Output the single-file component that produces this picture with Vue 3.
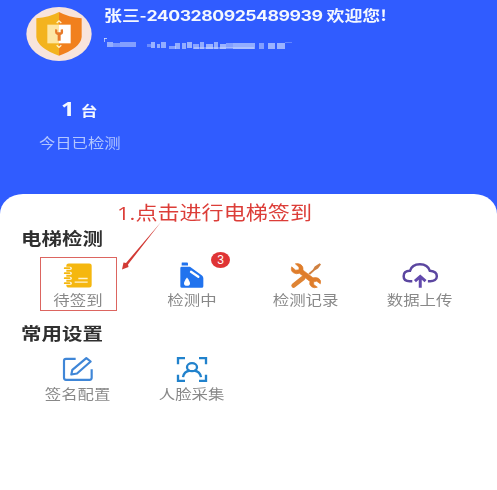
<script setup>
const features = [
  { id: 'book', label: '待签到', active: true },
  { id: 'fuel', label: '检测中', badge: 3 },
  { id: 'tools', label: '检测记录' },
  { id: 'cloud', label: '数据上传' },
]
const settings = [
  { id: 'edit', label: '签名配置' },
  { id: 'face', label: '人脸采集' },
]
const sections = [
  { title: '电梯检测', items: features },
  { title: '常用设置', items: settings },
]
// x, y, width, height, opacity of the masked account line
const mask = [
  [0, 0, 3, 1, 0.8], [0, 0, 1, 4, 0.7], [3, 4, 6, 5, 0.6], [9, 5, 7, 4, 0.45], [16, 4, 16, 5, 0.5],
  [43, 6, 4, 3, 0.35], [47, 4, 4, 6, 0.65], [53, 6, 3, 4, 0.6], [57, 4, 5, 6, 0.6], [65, 8, 7, 3, 0.5],
  [71, 5, 5, 6, 0.6], [78, 5, 4, 6, 0.6], [83, 4, 5, 6, 0.65], [89, 6, 6, 5, 0.55], [96, 4, 4, 7, 0.6],
  [102, 6, 7, 5, 0.65], [110, 4, 4, 7, 0.6], [116, 6, 6, 5, 0.65], [122, 5, 7, 5, 0.5], [129, 5, 22, 6, 0.6],
  [90, 9, 60, 2, 0.4], [155, 5, 5, 6, 0.5], [164, 5, 7, 6, 0.65], [173, 5, 8, 6, 0.65], [181, 4, 7, 1, 0.3],
]
</script>

<template>
  <main class="screen">
    <header class="hero">
      <div class="profile">
        <svg class="avatar" viewBox="0 0 198 162">
          <ellipse cx="99" cy="81" rx="98" ry="81" fill="#f8e4dc" />
          <path d="M99 15Q70 31 31 34V90Q34 123 99 146Z" fill="#f3b31e" />
          <path d="M99 15Q128 31 167 34V90Q164 123 99 146Z" fill="#f1801d" />
          <path d="M64 53H99V109H64Z" fill="#fde6a4" />
          <path d="M99 53H134V109H99Z" fill="#fff" />
          <path d="M92 48L99 42L106 48M92 115L99 121L106 115" fill="none" stroke="#fff3c9" stroke-width="4" />
          <path d="M88 66Q84 82 95 84V101H104V84Q115 82 110 66L104 68V76H94V68Z" fill="#e77a28" />
        </svg>
        <div class="who">
          <p class="name">张三-<span>2403280925489939</span> 欢迎您!</p>
          <svg class="mask" viewBox="0 0 190 14">
            <rect v-for="(m, i) in mask" :key="i" :x="m[0]" :y="m[1]" :width="m[2]" :height="m[3]" :opacity="m[4]" fill="#d5e2ff" />
          </svg>
        </div>
      </div>
      <div class="stat">
        <p class="count"><b>1</b><span>台</span></p>
        <p class="caption">今日已检测</p>
      </div>
    </header>

    <section class="panel">
      <div v-for="s in sections" :key="s.title" class="group">
        <h2>{{ s.title }}</h2>
        <ul>
          <li v-for="item in s.items" :key="item.id" :class="{ active: item.active }">
            <div class="icon">
              <svg v-if="item.id === 'book'" viewBox="0 0 90 74">
                <path d="M12 1H79Q86 1 86 7V66Q86 73 79 73H18Q10 73 10 66V7Q10 1 17 1Z" fill="#f5b70f" />
                <path d="M3 15H22M3 30H22M3 45H22M3 60H22" stroke="#fff" stroke-width="9" stroke-linecap="round" />
                <path d="M5 15H20M5 30H20M5 45H20M5 60H20" stroke="#f5b70f" stroke-width="5" stroke-linecap="round" />
                <path d="M46 46H74M35 57H74" stroke="#fff3cf" stroke-width="4" />
              </svg>
              <svg v-else-if="item.id === 'fuel'" viewBox="0 0 90 74">
                <path d="M15 -2H30Q33 -2 33 2V7H14V2Q14 -2 15 -2ZM14 11H39L75 37Q79 40 79 45V69Q79 74 74 74H15Q10 74 10 69V15Q10 11 14 11Z" fill="#2173ee" />
                <path d="M42 26L64 41" stroke="#fff" stroke-width="7" stroke-linecap="round" />
                <path d="M30 43Q21 55 21 60A9 8 0 0 0 39 60Q39 55 30 43Z" fill="#fff" />
              </svg>
              <svg v-else-if="item.id === 'tools'" viewBox="0 0 90 74">
                <path d="M8 67L36 45" stroke="#df8434" stroke-width="14" stroke-linecap="round" />
                <path d="M52 31L66 19L71 10L86 0L90 4L81 16L71 22L57 35Z" fill="#cf8040" />
                <path d="M13 2L24 12V20L14 21L2 11Q-2 24 8 29Q16 34 25 30L57 55Q53 64 62 71Q69 76 79 72L68 64V56L77 54L88 62Q92 51 82 45Q75 42 66 44L36 21Q38 10 29 4Q21 0 13 2Z" fill="#df7d2b" stroke="#df7d2b" stroke-width="2" />
              </svg>
              <svg v-else-if="item.id === 'cloud'" class="wide" viewBox="0 0 104 74">
                <path d="M28 54H20C7 54 2 47 2 39C2 29 9 23 21 23C25 9 36 3 51 3C67 3 77 10 81 23C95 24 102 30 102 39C102 49 93 54 82 54H75" fill="none" stroke="#5b46a0" stroke-width="7.5" />
                <path d="M52 74V40M36 54L52 40L68 54" fill="none" stroke="#6249ad" stroke-width="9" />
              </svg>
              <svg v-else-if="item.id === 'edit'" viewBox="0 0 90 74">
                <path d="M38 5H9Q3 5 3 11V62Q3 68 9 68H80Q86 68 86 62V36" fill="none" stroke="#3f86d7" stroke-width="6.5" />
                <path d="M25 52L28 38L70 3L83 13L42 49Z" fill="none" stroke="#3f86d7" stroke-width="6.5" stroke-linejoin="round" />
              </svg>
              <svg v-else viewBox="0 0 90 74">
                <path d="M3 21V3H24M66 3H87V21M87 53V71H66M24 71H3V53" fill="none" stroke="#2182cc" stroke-width="7" />
                <ellipse cx="45" cy="30" rx="15" ry="12" fill="none" stroke="#2182cc" stroke-width="7" />
                <path d="M18 60Q21 43 38 40M52 40Q69 43 72 60" fill="none" stroke="#2182cc" stroke-width="7" />
              </svg>
              <span v-if="item.badge" class="badge">{{ item.badge }}</span>
            </div>
            <span class="label">{{ item.label }}</span>
          </li>
        </ul>
      </div>
    </section>

    <div class="note">1.点击进行电梯签到</div>
    <svg class="arrow" viewBox="0 0 42 50">
      <path d="M40 1L7 43.5L7.5 46L1 48.5L2.5 41.5L5 42Z" fill="#d23a35" />
    </svg>
  </main>
</template>

<style>
body {
  margin: 0;
  background: #fff;
}
</style>

<style scoped>
.screen {
  position: relative;
  width: 497px;
  height: 490px;
  overflow: hidden;
  background: #305cff;
  font-family: "Noto Sans CJK SC", sans-serif;
}
p, h2, ul {
  margin: 0;
  padding: 0;
}
.hero {
  box-sizing: border-box;
  height: 194px;
  padding: 7px 0 0 25.5px;
}
.profile {
  display: flex;
  gap: 12.5px;
}
.avatar {
  width: 66px;
  height: 54px;
}
.who {
  display: flex;
  flex-direction: column;
}
.name {
  height: 31px;
  line-height: 15px;
  font-size: 14.8px;
  font-weight: 700;
  white-space: nowrap;
  color: #f4f8ff;
  transform: scaleX(1.21);
  transform-origin: left;
}
.name span {
  font-family: Inter, sans-serif;
  font-size: 14.6px;
  line-height: 1;
  letter-spacing: -0.4px;
}
.mask {
  width: 190px;
  height: 14px;
  filter: blur(0.5px);
}
.stat {
  display: flex;
  flex-direction: column;
  align-items: center;
  width: 108px;
  margin-top: 36px;
}
.count {
  display: flex;
  align-items: baseline;
  gap: 5px;
  height: 24px;
  line-height: 24px;
  color: #f4f8ff;
  transform: scaleX(1.2);
}
.count b {
  font-family: "Open Sans", sans-serif;
  font-size: 20px;
}
.count span {
  font-size: 14px;
  font-weight: 700;
}
.caption {
  margin-top: 11px;
  line-height: 20px;
  font-size: 13.5px;
  color: #b3c6ff;
  transform: scaleX(1.21);
}
.panel {
  box-sizing: border-box;
  height: 296px;
  padding: 32px 0 0 21px;
  border-radius: 23px 23px 0 0 / 20px 20px 0 0;
  background: #fff;
}
.group {
  height: 95px;
}
h2 {
  height: 24px;
  line-height: 24px;
  font-size: 16.5px;
  font-weight: 700;
  color: #303030;
  transform: scaleX(1.24);
  transform-origin: left;
}
ul {
  display: flex;
  list-style: none;
  padding-top: 7px;
}
li {
  box-sizing: border-box;
  width: 77px;
  height: 54px;
  margin: 0 18.5px;
  padding-top: 5px;
  display: flex;
  flex-direction: column;
  align-items: center;
  border: 1px solid transparent;
}
li.active {
  border-color: #dc6560;
}
.group + .group li {
  padding-top: 4px;
}
.icon {
  position: relative;
  display: flex;
  height: 25px;
}
.icon svg {
  width: 30px;
  height: 25px;
  overflow: visible;
}
.icon svg.wide {
  width: 34.5px;
}
.label {
  line-height: 23px;
  font-size: 13.3px;
  white-space: nowrap;
  color: #888;
  transform: scaleX(1.235);
}
.badge {
  position: absolute;
  left: 34px;
  top: -11px;
  width: 19px;
  height: 16px;
  border-radius: 50%;
  background: #df3435;
  color: #fff;
  text-align: center;
  font: 12px/16px "Liberation Sans", sans-serif;
}
.note {
  position: absolute;
  left: 117px;
  top: 199px;
  line-height: 28px;
  font-family: "Open Sans", "Noto Sans CJK SC", sans-serif;
  font-size: 18.8px;
  white-space: nowrap;
  color: #dc3d38;
  transform: scaleX(1.175);
  transform-origin: left;
}
.arrow {
  position: absolute;
  left: 121px;
  top: 221px;
  width: 42px;
  height: 50px;
}
</style>
